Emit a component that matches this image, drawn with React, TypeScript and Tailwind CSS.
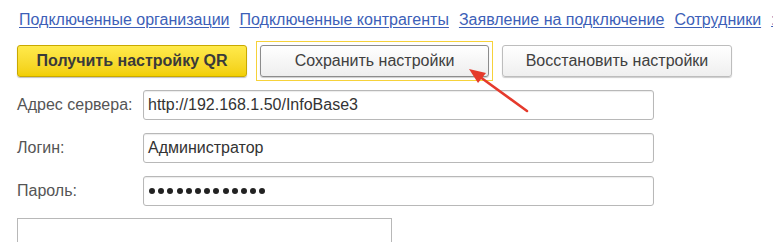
import React from "react";

export default function App() {
  const links = [
    "Подключенные организации",
    "Подключенные контрагенты",
    "Заявление на подключение",
    "Сотрудники",
  ];
  return (
    <div
      className="relative w-[773px] h-[242px] overflow-hidden bg-white text-[#4d4d4d]"
      style={{ fontFamily: '"Liberation Sans", Arial, sans-serif' }}
    >
      <div className="flex items-center gap-[10px] pl-[19px] pt-[10px] h-[30px] text-[16px] whitespace-nowrap">
        {links.map((l) => (
          <span key={l} className="text-[#3d5fb8] underline underline-offset-2 decoration-[1px]">
            {l}
          </span>
        ))}
        <span className="text-[#3d5fb8] underline">:</span>
      </div>
      <div className="flex items-center pl-[17px] mt-[11px] h-[40px]">
        <div className="w-[230px] h-[32px] rounded-[3px] border border-[#c9a900] bg-gradient-to-b from-[#ffea4a] to-[#f2cf00] flex items-center justify-center text-[16px] font-bold text-[#3a3a3a] shadow-[0_1px_1px_rgba(0,0,0,0.25)]">
          Получить настройку QR
        </div>
        <div className="ml-[9px] w-[237px] h-[40px] border border-[#f6d23a] p-[3px]">
          <div className="w-full h-full rounded-[3px] border border-[#8c8c8c] bg-gradient-to-b from-white to-[#eeeeee] flex items-center justify-center text-[16px] text-[#404040] shadow-[0_1px_1px_rgba(0,0,0,0.2)]">
            Сохранить настройки
          </div>
        </div>
        <div className="ml-[9px] w-[230px] h-[32px] rounded-[3px] border border-[#bdbdbd] bg-gradient-to-b from-white to-[#efefef] flex items-center justify-center text-[16px] text-[#404040] shadow-[0_1px_1px_rgba(0,0,0,0.2)]">
          Восстановить настройки
        </div>
      </div>
      <div className="flex flex-col gap-[13px] mt-[9px] pl-[17px]">
        {[
          ["Адрес сервера:", "http://192.168.1.50/InfoBase3"],
          ["Логин:", "Администратор"],
          ["Пароль:", ""],
        ].map(([label, value], i) => (
          <div key={label} className="flex items-center h-[30px]">
            <div className="w-[126px] text-[16px] text-[#555]">{label}</div>
            <div className="w-[511px] h-[30px] rounded-[3px] border border-[#b8b8b8] shadow-[inset_0_1px_1px_rgba(0,0,0,0.08)] flex items-center pl-[4px] text-[16px] text-[#333]">
              {i === 2 ? (
                <div className="flex items-center gap-[3.2px] pl-[1px]">
                  {Array.from({ length: 13 }).map((_, k) => (
                    <span key={k} className="block w-[6px] h-[6px] rounded-full bg-[#222]" />
                  ))}
                </div>
              ) : (
                value
              )}
            </div>
          </div>
        ))}
      </div>
      <div className="ml-[17px] mt-[12px] w-[375px] h-[40px] border border-[#b8b8b8]" />
      <svg className="absolute left-0 top-0 pointer-events-none" width="773" height="242">
        <line x1="527" y1="111" x2="476" y2="74" stroke="#e53a2c" strokeWidth="2.5" strokeLinecap="round" />
        <polygon points="469,69 486,73 478,83" fill="#e53a2c" />
      </svg>
    </div>
  );
}
